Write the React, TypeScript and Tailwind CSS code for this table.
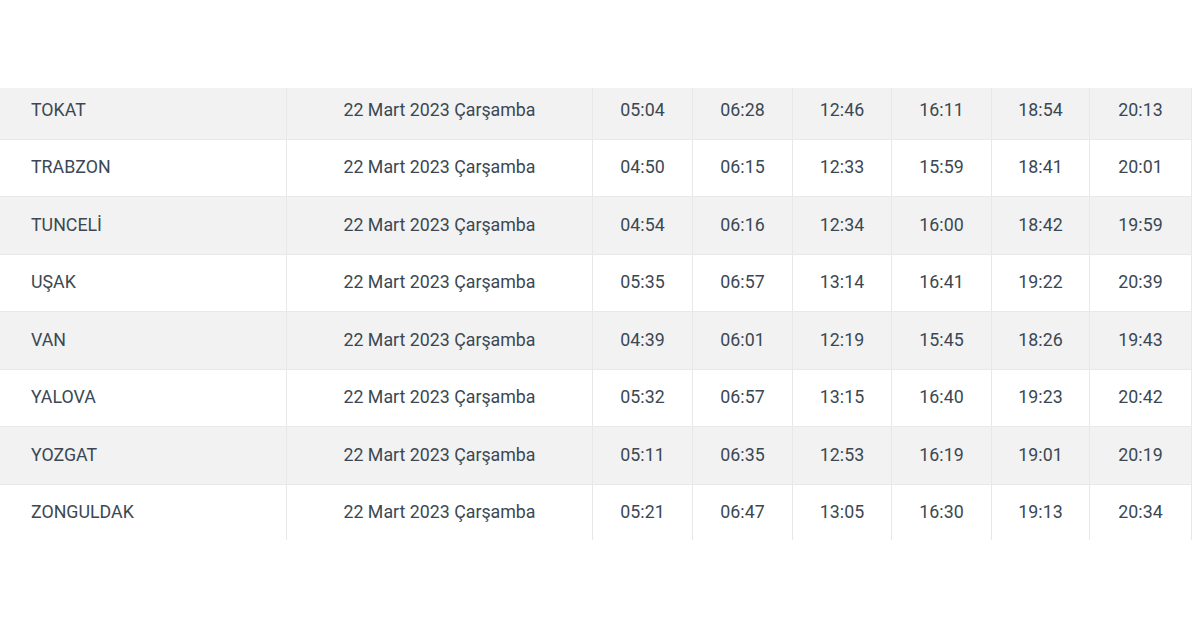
import React from "react";

const rows: [string, string[]][] = [
  ["TOKAT", ["05:04", "06:28", "12:46", "16:11", "18:54", "20:13"]],
  ["TRABZON", ["04:50", "06:15", "12:33", "15:59", "18:41", "20:01"]],
  ["TUNCELİ", ["04:54", "06:16", "12:34", "16:00", "18:42", "19:59"]],
  ["UŞAK", ["05:35", "06:57", "13:14", "16:41", "19:22", "20:39"]],
  ["VAN", ["04:39", "06:01", "12:19", "15:45", "18:26", "19:43"]],
  ["YALOVA", ["05:32", "06:57", "13:15", "16:40", "19:23", "20:42"]],
  ["YOZGAT", ["05:11", "06:35", "12:53", "16:19", "19:01", "20:19"]],
  ["ZONGULDAK", ["05:21", "06:47", "13:05", "16:30", "19:13", "20:34"]],
];

export default function App() {
  return (
    <div className="w-[1200px] h-[628px] bg-white overflow-hidden" style={{ fontFamily: "Roboto, 'Liberation Sans', sans-serif" }}>
      <div className="h-[88px]" />
      <div className="w-[1192px] h-[452px] overflow-hidden">
        <div className="-mt-[6px]">
          {rows.map(([name, times], i) => (
            <div
              key={name}
              className={`grid grid-cols-[287px_306px_100px_100px_99px_100px_98px_102px] h-[57.5px] border-b border-[#e8e8e8] text-[17.8px] text-[#3b4853] ${i % 2 === 0 ? "bg-[#f2f2f2]" : "bg-white"}`}
            >
              <div className="flex items-center pl-[31px] border-r border-[#e8e8e8]">{name}</div>
              <div className="flex items-center justify-center border-r border-[#e8e8e8]">22 Mart 2023 Çarşamba</div>
              {times.map((t, j) => (
                <div key={j} className="flex items-center justify-center border-r border-[#e8e8e8]">
                  {t}
                </div>
              ))}
            </div>
          ))}
        </div>
      </div>
    </div>
  );
}
